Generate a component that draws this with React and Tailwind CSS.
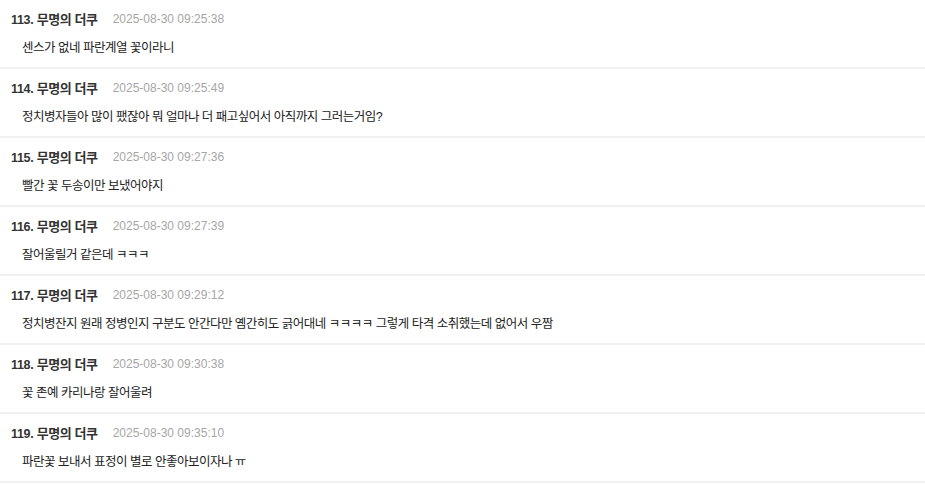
import React from "react";

const comments = [
  { no: 113, date: "2025-08-30 09:25:38", text: "센스가 없네 파란계열 꽃이라니" },
  { no: 114, date: "2025-08-30 09:25:49", text: "정치병자들아 많이 팼잖아 뭐 얼마나 더 패고싶어서 아직까지 그러는거임?" },
  { no: 115, date: "2025-08-30 09:27:36", text: "빨간 꽃 두송이만 보냈어야지" },
  { no: 116, date: "2025-08-30 09:27:39", text: "잘어울릴거 같은데 ㅋㅋㅋ" },
  { no: 117, date: "2025-08-30 09:29:12", text: "정치병잔지 원래 정병인지 구분도 안간다만 옘간히도 긁어대네 ㅋㅋㅋㅋ 그렇게 타격 소취했는데 없어서 우짬" },
  { no: 118, date: "2025-08-30 09:30:38", text: "꽃 존예 카리나랑 잘어울려" },
  { no: 119, date: "2025-08-30 09:35:10", text: "파란꽃 보내서 표정이 별로 안좋아보이자나 ㅠ" },
];

const font = {
  fontFamily: '"Liberation Sans", "Noto Sans CJK KR", sans-serif',
};

const CommentRow = ({ item }) => {
  return (
    <div className="w-full border-b-2 border-[#f1f1f1]">
      <div className="flex items-center h-[20px] mt-[9px] pl-[11px]">
        <span className="font-bold text-[#333333]">
          <span className="text-[12.5px] tracking-[-0.3px]">{item.no}. </span>
          <span className="text-[13px] tracking-[-0.4px]">무명의 더쿠</span>
        </span>
        <span className="ml-[15px] text-[12px] text-[#a6a6a6]">{item.date}</span>
      </div>
      <div className="flex items-center h-[20px] mt-[9px] mb-[9px] pl-[22px]">
        <p className="text-[12.5px] text-[#222222] tracking-[-0.5px] whitespace-nowrap">
          {item.text}
        </p>
      </div>
    </div>
  );
};

const App = () => {
  return (
    <section className="w-[925px] h-[484px] bg-white overflow-hidden" style={font}>
      {comments.map((item) => (
        <CommentRow key={item.no} item={item} />
      ))}
    </section>
  );
};

export default App;
